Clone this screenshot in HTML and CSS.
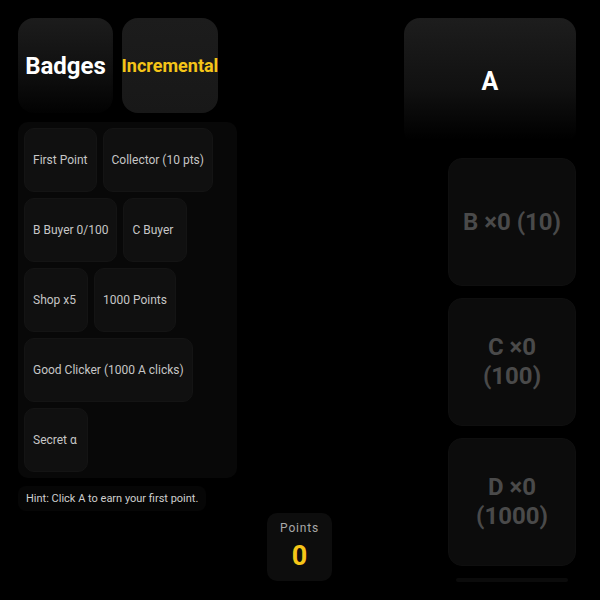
FILE: index.html
```html
<!DOCTYPE html>
<html lang="en">
<head>
<meta charset="utf-8">
<title>Incremental</title>
<link rel="stylesheet" href="styles.css">
</head>
<body>
<div class="app">
  <div class="left">
    <div class="tabs">
      <button class="tab tab-badges">Badges</button>
      <button class="tab tab-inc">Incremental</button>
    </div>
    <div class="panel">
      <div class="badge">First Point</div>
      <div class="badge">Collector (10 pts)</div>
      <div class="badge">B Buyer 0/100</div>
      <div class="badge">C Buyer</div>
      <div class="badge">Shop x5</div>
      <div class="badge">1000 Points</div>
      <div class="badge">Good Clicker (1000 A clicks)</div>
      <div class="badge">Secret α</div>
    </div>
    <div class="hint">Hint: Click A to earn your first point.</div>
  </div>
  <div class="right">
    <button class="a-btn">A</button>
    <button class="card">B ×0 (10)</button>
    <button class="card">C ×0 (100)</button>
    <button class="card">D ×0 (1000)</button>
    <div class="peek"></div>
  </div>
</div>
<div class="points">
  <div class="points-label">Points</div>
  <div class="points-value">0</div>
</div>
</body>
</html>
```
FILE: styles.css
```css
* { box-sizing: border-box; }
html, body {
  margin: 0;
  height: 600px;
  overflow: hidden;
  background: #000;
  font-family: Roboto, "Noto Sans", "Liberation Sans", sans-serif;
}
.app {
  display: flex;
  justify-content: space-between;
  align-items: flex-start;
  padding: 18px 24px 0 18px;
}
.left {
  width: 219px;
  display: flex;
  flex-direction: column;
  align-items: flex-start;
}
.tabs {
  display: flex;
  gap: 9px;
}
.tab {
  height: 95px;
  border: none;
  border-radius: 16px;
  padding: 0;
  font-family: inherit;
  font-weight: 700;
  display: flex;
  align-items: center;
  justify-content: center;
}
.tab-badges {
  width: 95px;
  font-size: 24px;
  color: #fff;
  background: linear-gradient(180deg, #1c1c1c 0%, #101010 55%, #020202 100%);
}
.tab-inc {
  width: 96px;
  font-size: 18px;
  color: #f5c518;
  background: linear-gradient(180deg, #1c1c1c 0%, #181818 100%);
  box-shadow: 0 4px 10px rgba(0,0,0,0.6);
  white-space: nowrap;
}
.panel {
  margin-top: 9px;
  width: 219px;
  padding: 6px;
  background: #080808;
  border-radius: 10px;
  display: flex;
  flex-wrap: wrap;
  gap: 6px;
}
.badge {
  height: 64px;
  min-width: 64px;
  padding: 0 8px;
  display: flex;
  align-items: center;
  background: #101010;
  border: 1px solid #141414;
  border-radius: 10px;
  color: #c6c6c6;
  font-size: 12px;
  white-space: nowrap;
}
.hint {
  margin-top: 8px;
  height: 25px;
  padding: 0 8px;
  display: flex;
  align-items: center;
  background: #060606;
  border-radius: 8px;
  color: #cfcfcf;
  font-size: 11px;
}
.right {
  width: 172px;
  display: flex;
  flex-direction: column;
  align-items: flex-end;
  gap: 12px;
}
.a-btn {
  width: 172px;
  height: 128px;
  border: none;
  border-radius: 16px;
  background: linear-gradient(180deg, #1d1d1d 0%, #111 55%, #000 95%);
  color: #fff;
  font-family: inherit;
  font-weight: 700;
  font-size: 25px;
  padding: 0 0 2px;
}
.card {
  width: 128px;
  height: 128px;
  flex: none;
  border: 1px solid #0f0f0f;
  border-radius: 14px;
  background: #0c0c0c;
  color: #4a4a4a;
  font-family: inherit;
  font-weight: 700;
  font-size: 24px;
  line-height: 1.2;
  padding: 0 12px;
  text-align: center;
}
.peek {
  width: 112px;
  height: 4px;
  margin-right: 8px;
  border-radius: 2px;
  background: #0b0b0b;
}
.points {
  position: fixed;
  left: 267px;
  bottom: 19px;
  width: 65px;
  height: 68px;
  background: #0d0d0d;
  border-radius: 10px;
  display: flex;
  flex-direction: column;
  align-items: center;
  padding-top: 8px;
}
.points-label {
  color: #a8a8a8;
  font-size: 12px;
  letter-spacing: 0.8px;
}
.points-value {
  margin-top: 4px;
  color: #f5c518;
  font-size: 27px;
  font-weight: 700;
  line-height: 34px;
}
```
